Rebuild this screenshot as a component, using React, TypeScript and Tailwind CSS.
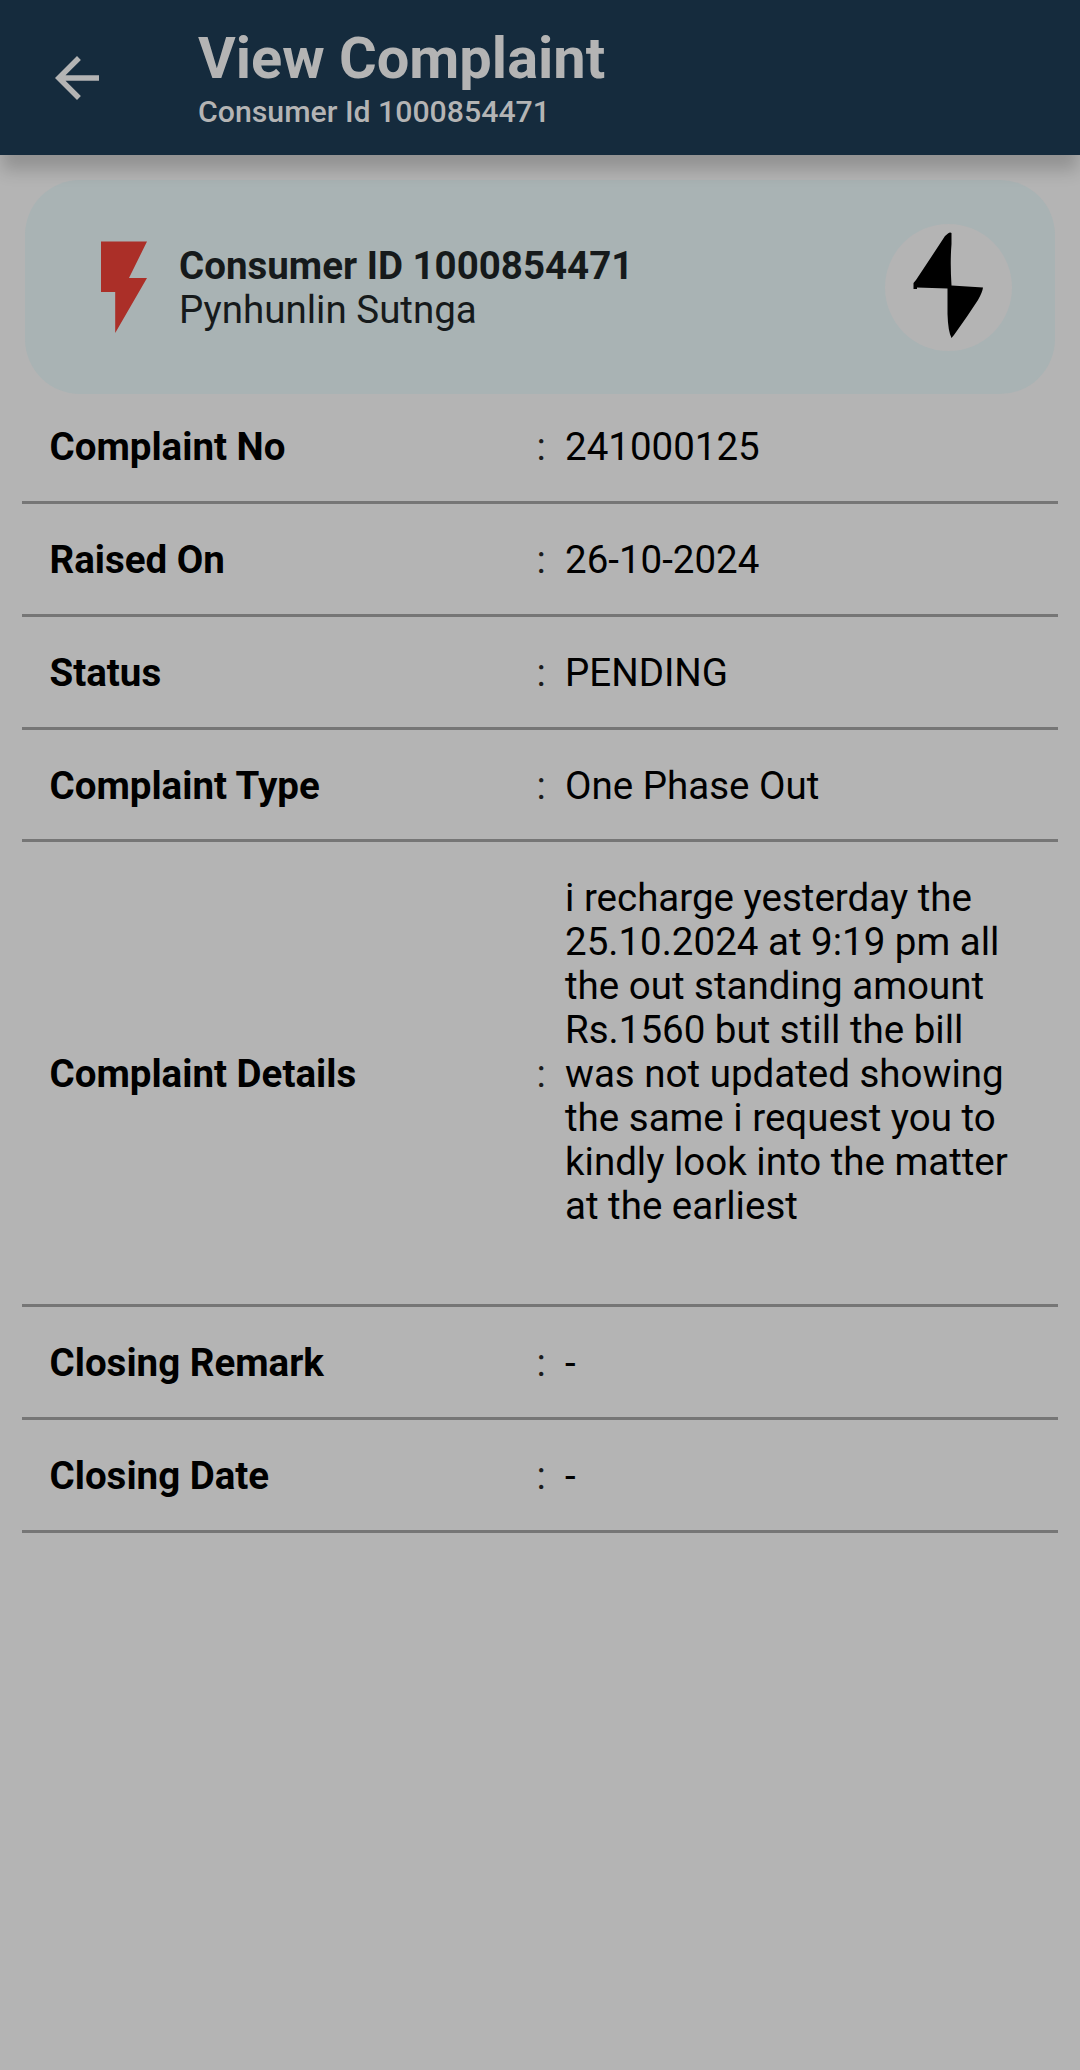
import React from "react";

const rows: { label: string; value: string; size: string }[] = [
  { label: "Complaint No", value: "241000125", size: "h-[113px]" },
  { label: "Raised On", value: "26-10-2024", size: "h-[113px]" },
  { label: "Status", value: "PENDING", size: "h-[113px]" },
  { label: "Complaint Type", value: "One Phase Out", size: "h-[112px]" },
  {
    label: "Complaint Details",
    value:
      "i recharge yesterday the\n25.10.2024 at 9:19 pm all\nthe out standing amount\nRs.1560 but still the bill\nwas not updated showing\nthe same i request you to\nkindly look into the matter\nat the earliest\n\u00a0",
    size: "h-[465px]",
  },
  { label: "Closing Remark", value: "-", size: "h-[113px]" },
  { label: "Closing Date", value: "-", size: "h-[113px]" },
];

export default function App() {
  return (
    <div className="flex h-[2070px] w-[1080px] flex-col overflow-hidden bg-[#b4b4b4] font-['Roboto',sans-serif] text-[38.5px] leading-[44px] text-black">
      <header className="z-10 flex h-[155px] shrink-0 items-center bg-[#152b3d] text-[#b4b4b4] shadow-[0_17px_16px_-2px_rgba(0,0,0,0.19)]">
        <svg className="ml-[44px] h-[66px] w-[66px] shrink-0" viewBox="0 0 24 24" fill="currentColor">
          <path d="M20 11H7.83l5.59-5.59L12 4l-8 8 8 8 1.41-1.41L7.83 13H20v-2z" />
        </svg>
        <div className="ml-[88px] whitespace-nowrap">
          <h1 className="pb-[4px] text-[57.75px] leading-[64px] font-bold">View Complaint</h1>
          <p className="text-[30.25px] leading-[36px] font-medium">Consumer Id 1000854471</p>
        </div>
      </header>

      <section className="mx-[25px] mt-[25px] flex h-[214px] shrink-0 items-center rounded-[55px] bg-[#a9b3b4] text-[#161a1b]">
        <svg className="ml-[76px] h-[92px] w-[46px] shrink-0" viewBox="0 0 46 92">
          <path d="M0 0.5H46L28 37H46L14.2 92V51H0z" fill="#ab2f28" />
        </svg>
        <div className="ml-[32px] flex-1 pt-[2px]">
          <div className="font-bold">Consumer ID 1000854471</div>
          <div>Pynhunlin Sutnga</div>
        </div>
        <div className="mr-[43px] flex h-[127px] w-[127px] items-center justify-center rounded-full bg-[#b4b4b4]">
          <svg className="h-[127px] w-[127px]" viewBox="0 0 127 127">
            <path
              d="M63 9.5Q65 8 66.5 9V20Q65 38 66.5 61.5L98 63.5Q97.5 68 93 76Q82 93 69 111L66.5 114Q63 107 62.5 90V64.5L32 63.5V65H28.5V59L31 56Q45 35 60 12z"
              fill="#000"
            />
          </svg>
        </div>
      </section>

      <main className="mx-[22px] -mt-[3px] flex flex-col">
        {rows.map((row) => (
          <div
            key={row.label}
            className={`flex shrink-0 items-center border-b-[3px] border-[#767676] pt-[2px] pl-[27.5px] ${row.size}`}
          >
            <div className="w-[487px] font-bold">{row.label}</div>
            <div className="w-[28.5px] text-[#1c1c1c]">:</div>
            <div className="whitespace-pre">{row.value}</div>
          </div>
        ))}
      </main>
    </div>
  );
}
